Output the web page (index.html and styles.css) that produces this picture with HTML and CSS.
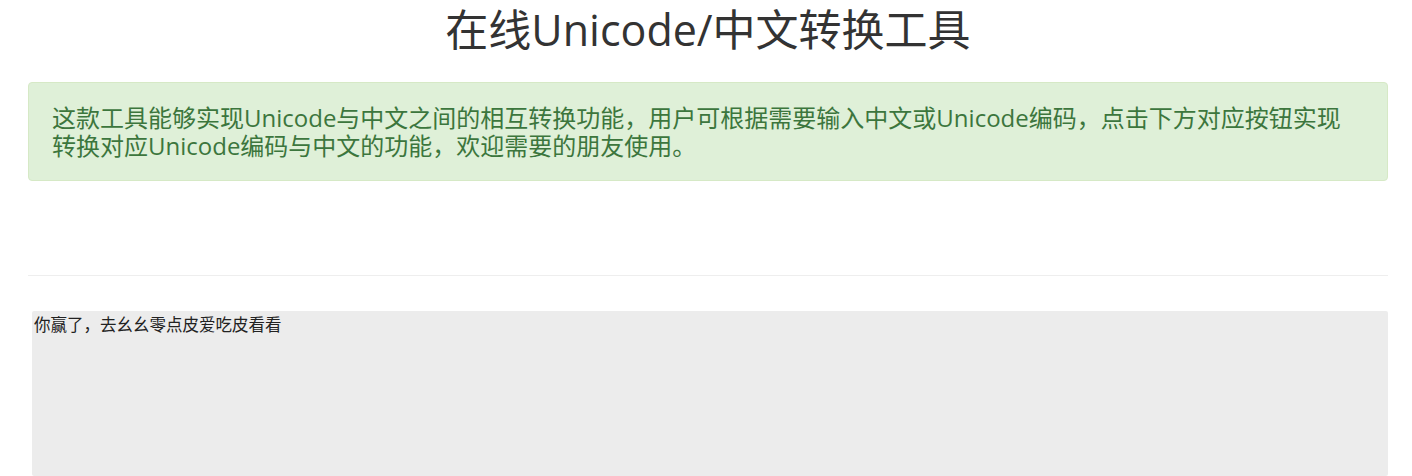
FILE: index.html
```html
<!DOCTYPE html>
<html lang="zh-CN">
<head>
<meta charset="utf-8">
<title>在线Unicode/中文转换工具</title>
<link rel="stylesheet" href="styles.css">
</head>
<body>
<div class="container">
  <h1 class="title">在线Unicode/中文转换工具</h1>
  <div class="alert">
    <h3 class="alert-text">这款工具能够实现Unicode与中文之间的相互转换功能，用户可根据需要输入中文或Unicode编码，点击下方对应按钮实现转换对应Unicode编码与中文的功能，欢迎需要的朋友使用。</h3>
  </div>
  <div class="spacer"></div>
  <hr class="divider">
  <div class="editor">
    <textarea class="input">你赢了，去幺幺零点皮爱吃皮看看</textarea>
  </div>
</div>
</body>
</html>
```

FILE: styles.css
```css
html, body {
  margin: 0;
  padding: 0;
  background: #ffffff;
}
body {
  font-family: "Open Sans", "Noto Sans CJK SC", sans-serif;
  color: #333333;
  overflow: hidden;
}
.container {
  padding: 0 24px 0 28px;
}
.title {
  margin: 7px 0 0;
  font-size: 43px;
  font-weight: 400;
  line-height: 46px;
  text-align: center;
  color: #333333;
}
.alert {
  margin-top: 29px;
  background: #dff0d8;
  border: 1px solid #d6e9c6;
  border-radius: 4px;
  padding: 21px 32px 20px 23px;
  color: #3c763d;
}
.alert-text {
  margin: 0;
  font-size: 24px;
  font-weight: 400;
  line-height: 28px;
}
.spacer {
  height: 94px;
}
.divider {
  margin: 0;
  border: 0;
  border-top: 1px solid #eeeeee;
  height: 0;
}
.editor {
  padding: 35px 0 0 4px;
}
.input {
  display: block;
  box-sizing: border-box;
  width: 100%;
  height: 165px;
  margin: 0;
  padding: 2px;
  border: none;
  border-radius: 2px;
  background: #ececec;
  color: #222222;
  font-family: "Noto Sans CJK SC", sans-serif;
  font-size: 16.5px;
  line-height: 23px;
  resize: none;
}
```
